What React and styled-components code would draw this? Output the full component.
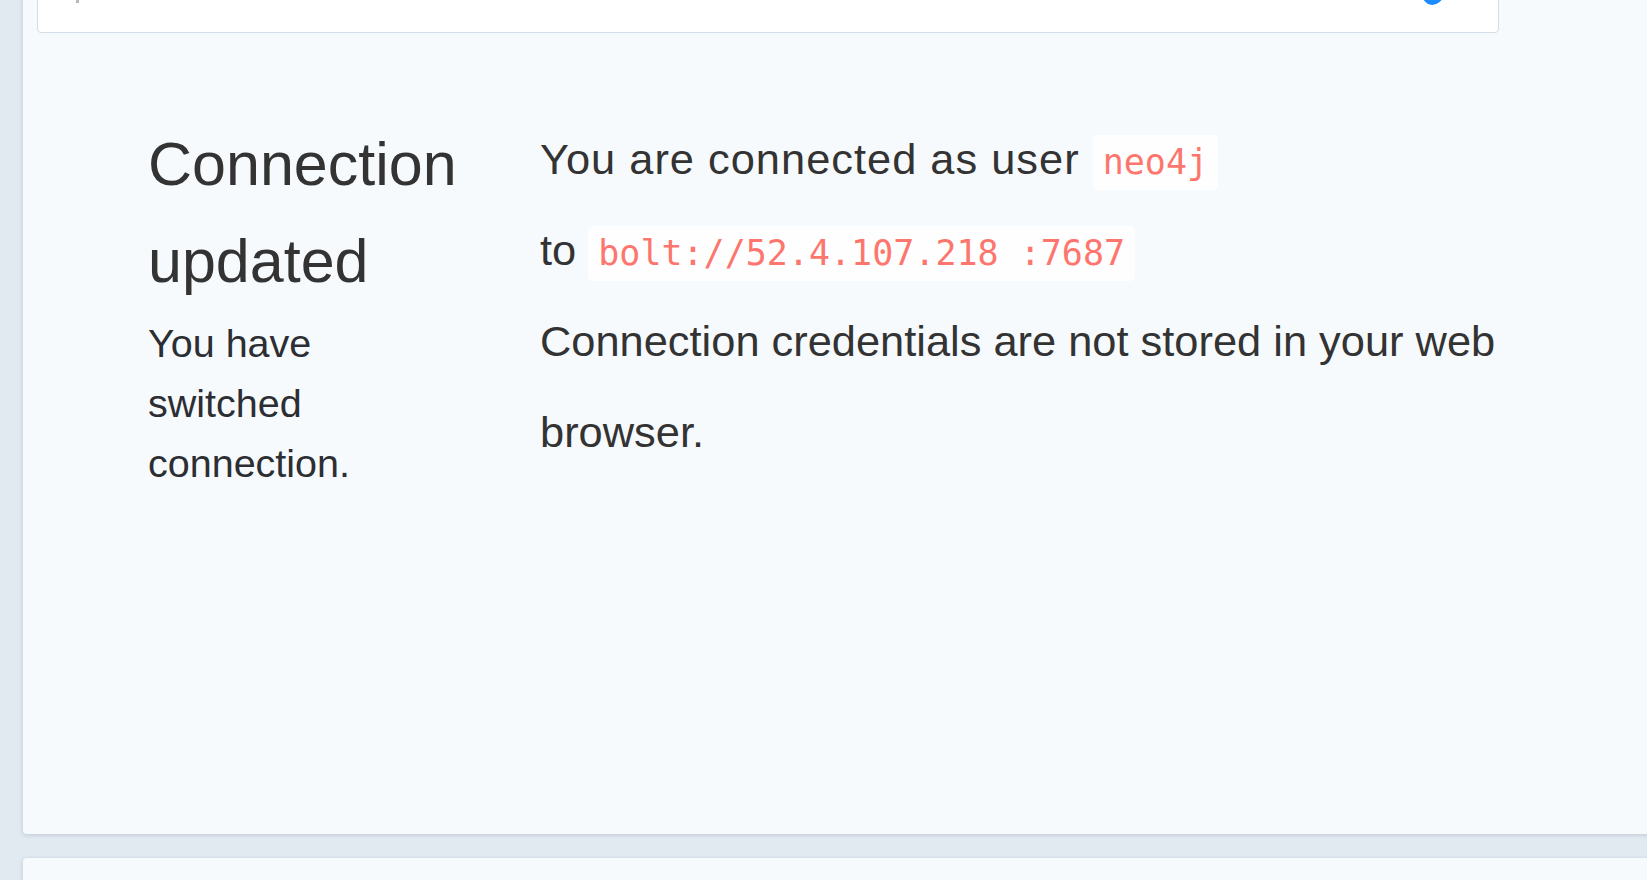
import styled, { createGlobalStyle } from 'styled-components';

const GlobalStyle = createGlobalStyle`
  html, body {
    margin: 0;
    padding: 0;
    overflow: hidden;
    background: #e1e9f1;
  }
  * { box-sizing: border-box; }
`;

const Stream = styled.main`
  display: flex;
  flex-direction: column;
  gap: 24px;
  width: 1720px;
  margin-top: -41px;
  padding-left: 23px;
  font-family: "Liberation Sans", Arial, sans-serif;
  color: #333;
`;

const Frame = styled.section`
  display: flex;
  flex-direction: column;
  height: ${p => p.$height}px;
  padding: 14px 0 0 14px;
  background: #f7fafd;
  border-radius: 4px;
  box-shadow: 0 1px 4px rgba(40, 60, 80, 0.18);
`;

const EditorBar = styled.div`
  display: flex;
  justify-content: space-between;
  align-items: flex-start;
  width: 1462px;
  height: 60px;
  padding: 19px 50px 0 38px;
  background: #fff;
  border: 1px solid #d3dee9;
  border-radius: 4px;
`;

const Caret = styled.span`
  display: block;
  width: 3px;
  height: 10px;
  background: #b9b9b9;
`;

const RunIcon = styled.svg`
  display: block;
  margin-top: -5px;
`;

const Body = styled.div`
  display: grid;
  grid-template-columns: 318px 1fr;
  column-gap: 74px;
  margin-top: 83px;
  padding-left: 111px;
  width: 1520px;
`;

const Aside = styled.div`
  display: flex;
  flex-direction: column;
`;

const Title = styled.h3`
  margin: 0;
  font-size: 61px;
  font-weight: 400;
  line-height: 97px;
  color: #333;
`;

const Lead = styled.p`
  margin: 3px 0 0;
  font-size: 39.5px;
  line-height: 60px;
  color: #2c2e33;
`;

const Main = styled.div`
  margin-top: -2px;
  font-size: 43.4px;
  line-height: 91px;
`;

const Line = styled.p`
  margin: 0;
`;

const Spaced = styled.span`
  letter-spacing: 1px;
`;

const Code = styled.code`
  padding: 7px 10px 8px;
  font-family: "DejaVu Sans Mono", monospace;
  font-size: 35px;
  line-height: 1;
  letter-spacing: 0;
  color: #fd766e;
  background: #fefefe;
  border-radius: 5px;
`;

export default function App() {
  return (
    <>
      <GlobalStyle />
      <Stream>
        <Frame $height={875}>
          <EditorBar>
            <Caret />
            <RunIcon width="28" height="20" viewBox="0 0 28 20">
              <path d="M2 9 C7 20 18 20 26 6 C18 13 10 14 2 9 Z" fill="#1a8cff" />
            </RunIcon>
          </EditorBar>
          <Body>
            <Aside>
              <Title>Connection updated</Title>
              <Lead>You have switched connection.</Lead>
            </Aside>
            <Main>
              <Line>
                <Spaced>You are connected as user </Spaced><Code>neo4j</Code>
                <br />
                to <Code>bolt://52.4.107.218 :7687</Code>
              </Line>
              <Line>Connection credentials are not stored in your web browser.</Line>
            </Main>
          </Body>
        </Frame>
        <Frame $height={300} />
      </Stream>
    </>
  );
}
